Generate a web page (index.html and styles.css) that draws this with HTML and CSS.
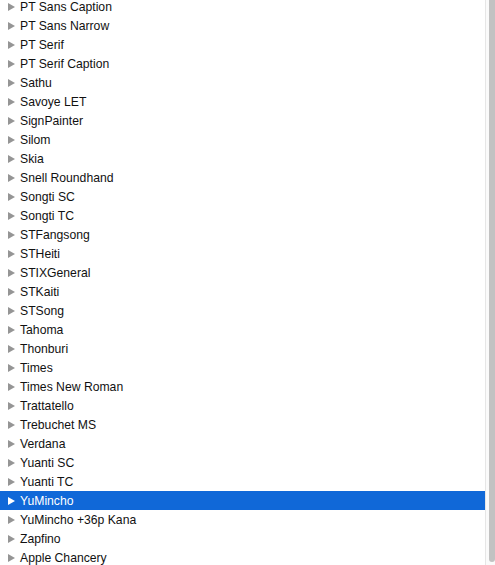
FILE: index.html
```html
<!DOCTYPE html>
<html>
<head>
<meta charset="utf-8">
<link rel="stylesheet" href="styles.css">
</head>
<body>
<div class="window">
  <ul class="list">
    <li class="row"><span class="tri"></span>PT Sans Caption</li>
    <li class="row"><span class="tri"></span>PT Sans Narrow</li>
    <li class="row"><span class="tri"></span>PT Serif</li>
    <li class="row"><span class="tri"></span>PT Serif Caption</li>
    <li class="row"><span class="tri"></span>Sathu</li>
    <li class="row"><span class="tri"></span>Savoye LET</li>
    <li class="row"><span class="tri"></span>SignPainter</li>
    <li class="row"><span class="tri"></span>Silom</li>
    <li class="row"><span class="tri"></span>Skia</li>
    <li class="row"><span class="tri"></span>Snell Roundhand</li>
    <li class="row"><span class="tri"></span>Songti SC</li>
    <li class="row"><span class="tri"></span>Songti TC</li>
    <li class="row"><span class="tri"></span>STFangsong</li>
    <li class="row"><span class="tri"></span>STHeiti</li>
    <li class="row"><span class="tri"></span>STIXGeneral</li>
    <li class="row"><span class="tri"></span>STKaiti</li>
    <li class="row"><span class="tri"></span>STSong</li>
    <li class="row"><span class="tri"></span>Tahoma</li>
    <li class="row"><span class="tri"></span>Thonburi</li>
    <li class="row"><span class="tri"></span>Times</li>
    <li class="row"><span class="tri"></span>Times New Roman</li>
    <li class="row"><span class="tri"></span>Trattatello</li>
    <li class="row"><span class="tri"></span>Trebuchet MS</li>
    <li class="row"><span class="tri"></span>Verdana</li>
    <li class="row"><span class="tri"></span>Yuanti SC</li>
    <li class="row"><span class="tri"></span>Yuanti TC</li>
    <li class="row selected"><span class="tri"></span>YuMincho</li>
    <li class="row"><span class="tri"></span>YuMincho +36p Kana</li>
    <li class="row"><span class="tri"></span>Zapfino</li>
    <li class="row"><span class="tri"></span>Apple Chancery</li>
  </ul>
  <div class="scrollbar"><div class="thumb"></div></div>
</div>
</body>
</html>
```
FILE: styles.css
```css
html, body {
  margin: 0;
  padding: 0;
  background: #ffffff;
  overflow: hidden;
}
.window {
  display: flex;
  width: 495px;
  height: 565px;
  overflow: hidden;
  font-family: "Liberation Sans", Arial, sans-serif;
  font-size: 12.2px;
  color: #111111;
}
.list {
  flex: 1;
  list-style: none;
  margin: -3px 0 0 0;
  padding: 0;
}
.row {
  height: 19px;
  display: flex;
  align-items: center;
  padding-left: 8px;
  white-space: nowrap;
}
.tri {
  width: 0;
  height: 0;
  border-top: 4px solid transparent;
  border-bottom: 4px solid transparent;
  border-left: 7px solid #959595;
  margin-right: 5px;
}
.selected {
  background: #1068d8;
  color: #ffffff;
}
.selected .tri {
  border-left-color: #ffffff;
}
.scrollbar {
  width: 9px;
  border-left: 1px solid #e6e6e6;
  background: #fafafa;
  display: flex;
  justify-content: flex-end;
}
.thumb {
  width: 6px;
  height: 572px;
  margin-top: -10px;
  background: #c2c2c2;
  border-radius: 3px;
}
```
